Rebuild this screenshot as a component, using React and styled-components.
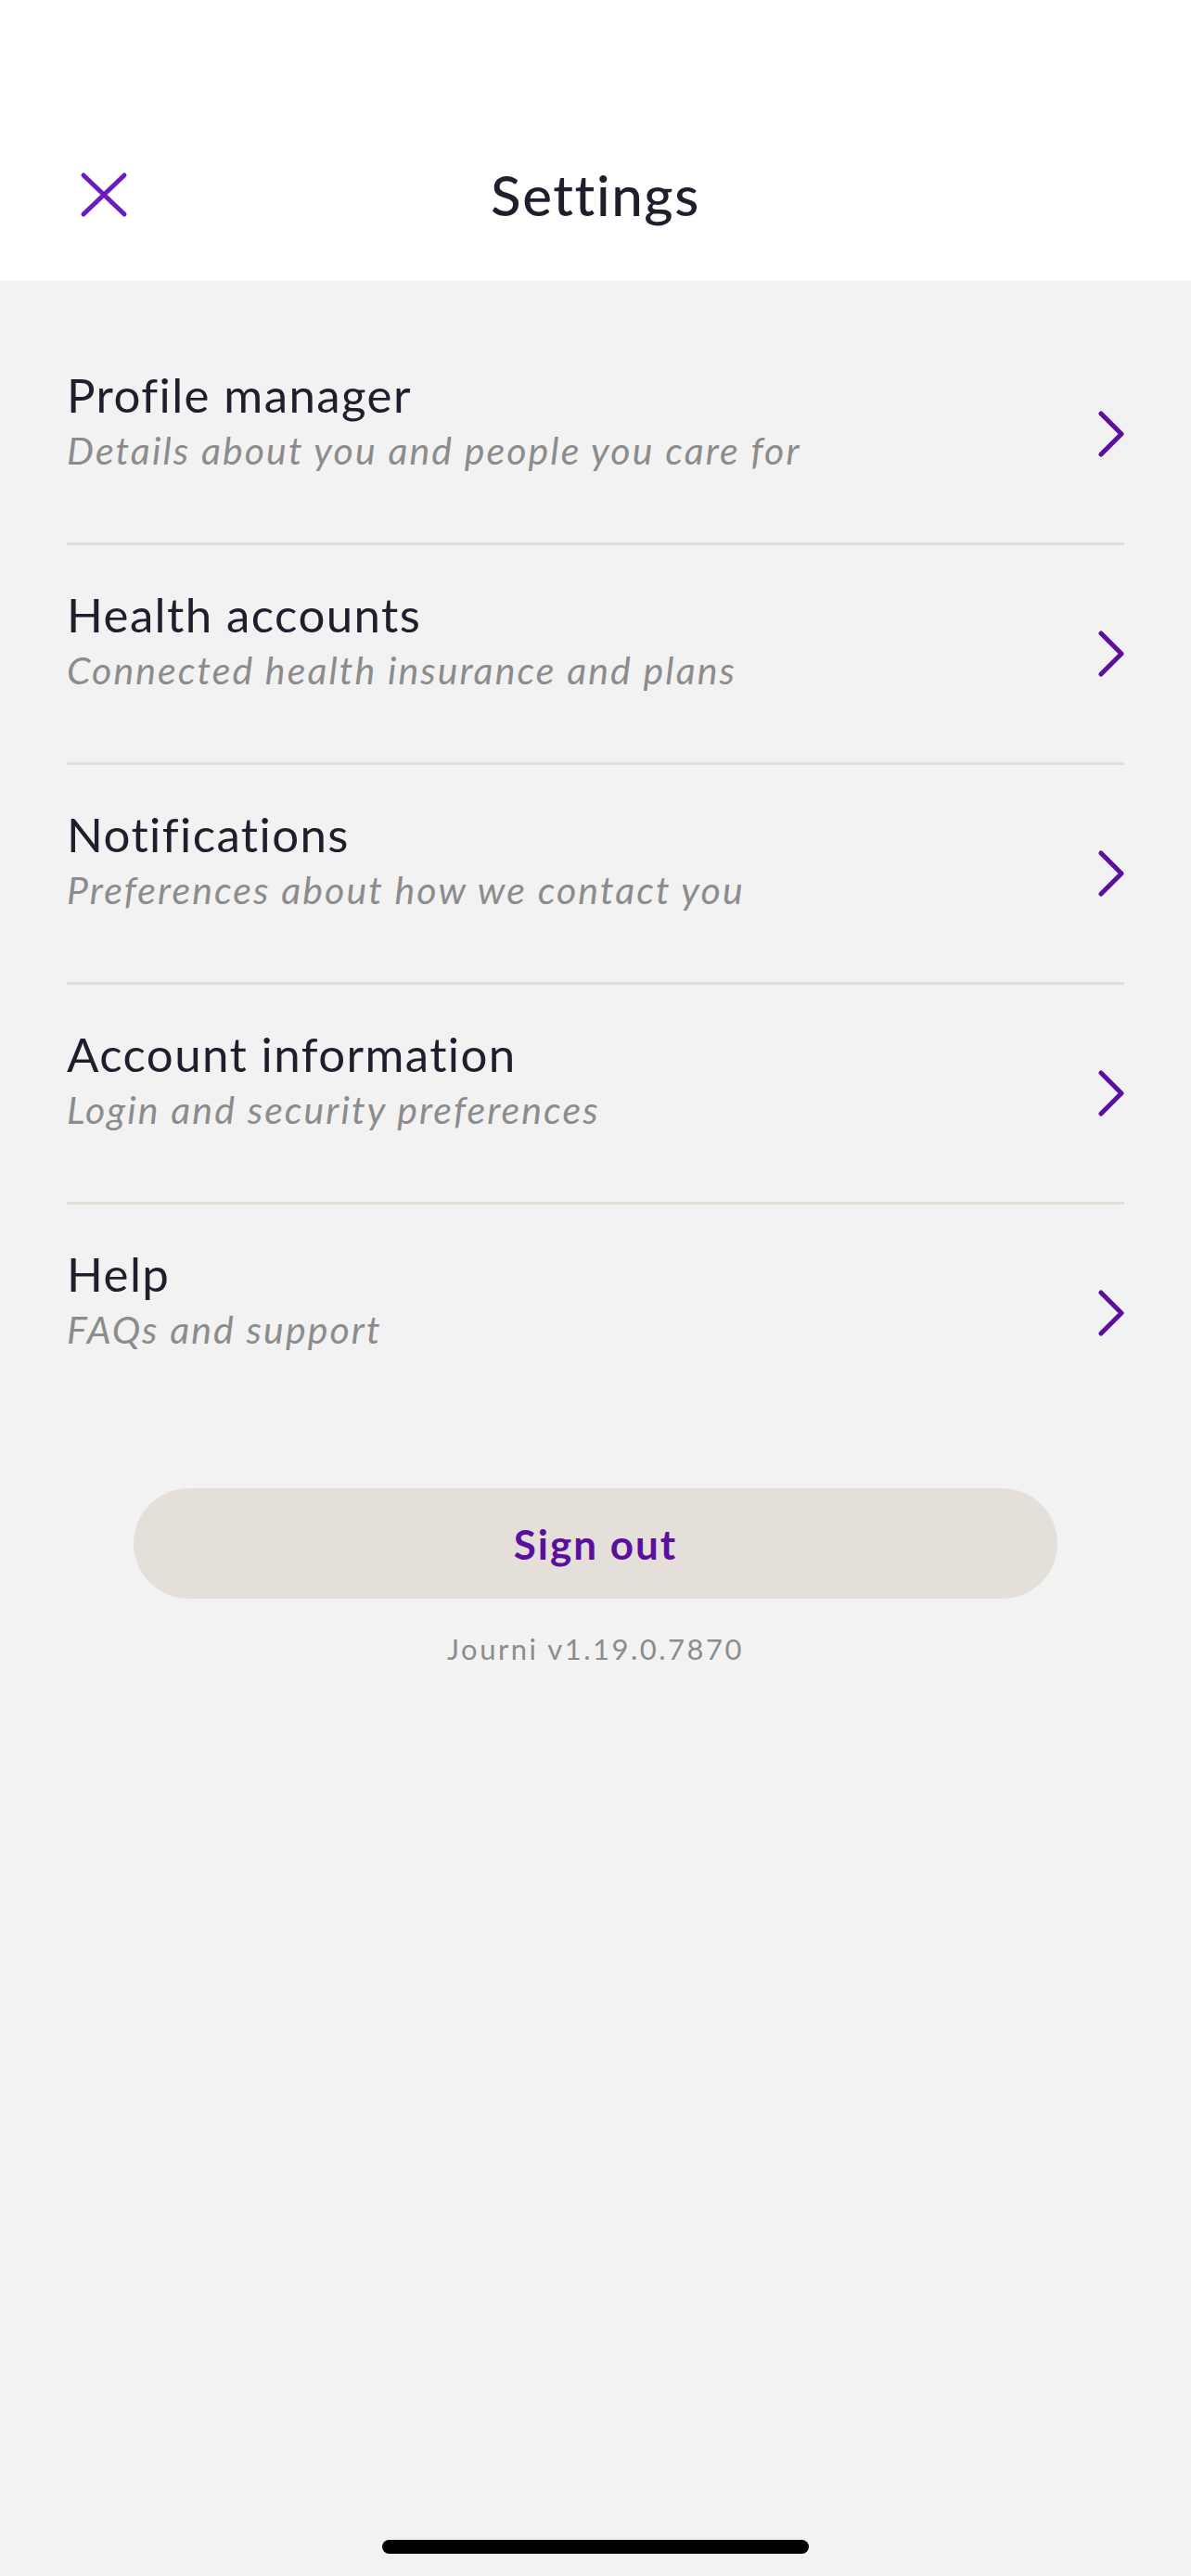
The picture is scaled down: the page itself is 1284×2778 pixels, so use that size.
import React from 'react';
import styled, { createGlobalStyle } from 'styled-components';

const colors = {
  bg: '#f2f2f2',
  white: '#ffffff',
  ink: '#1f1e2c',
  muted: '#8c8c8c',
  divider: '#e3dfd7',
  button: '#e4e0d9',
  purple: '#5b0f9e',
  close: '#6b1dbd',
};

const GlobalStyle = createGlobalStyle`
  html, body {
    margin: 0;
    padding: 0;
    background: ${colors.bg};
  }
  body {
    font-family: Lato, "Noto Sans", sans-serif;
    -webkit-font-smoothing: antialiased;
  }
`;

const Screen = styled.div`
  position: relative;
  min-height: 2778px;
  background: ${colors.bg};
`;

const Header = styled.header`
  height: 303px;
  box-sizing: border-box;
  padding: 150px 86px 0;
  background: ${colors.white};
`;

const TitleBar = styled.div`
  display: grid;
  grid-template-columns: 120px 1fr 120px;
  align-items: center;
  height: 120px;
`;

const CloseButton = styled.button`
  display: flex;
  align-items: center;
  width: 52px;
  height: 50px;
  padding: 0;
  border: none;
  background: none;
  cursor: pointer;
`;

const Title = styled.h1`
  margin: 0;
  text-align: center;
  font-size: 60px;
  font-weight: 500;
  color: ${colors.ink};
  letter-spacing: 1.6px;
`;

const List = styled.ul`
  list-style: none;
  margin: 0;
  padding: 48px 72px 0;
`;

const Row = styled.li`
  display: flex;
  align-items: center;
  justify-content: space-between;
  height: 237px;
  box-sizing: border-box;
  border-bottom: 3px solid ${({ last }) => (last ? 'transparent' : colors.divider)};
  cursor: pointer;
`;

const RowText = styled.div`
  display: flex;
  flex-direction: column;
  padding-bottom: 22px;
`;

const RowTitle = styled.span`
  font-size: 51px;
  line-height: 58px;
  color: ${colors.ink};
  letter-spacing: 1.4px;
`;

const RowSubtitle = styled.span`
  font-size: 41px;
  line-height: 62px;
  font-style: italic;
  color: ${colors.muted};
  letter-spacing: 2.1px;
`;

const Chevron = styled.svg`
  flex: none;
`;

const Footer = styled.div`
  display: flex;
  flex-direction: column;
  align-items: center;
  padding-top: 69px;
`;

const SignOut = styled.button`
  width: 996px;
  height: 119px;
  border: none;
  border-radius: 60px;
  background: ${colors.button};
  color: ${colors.purple};
  font-family: Lato, "Noto Sans", sans-serif;
  font-size: 44px;
  font-weight: 700;
  letter-spacing: 2px;
  cursor: pointer;
`;

const Version = styled.p`
  margin: 34px 0 0;
  font-size: 31px;
  line-height: 40px;
  color: ${colors.muted};
  letter-spacing: 2.5px;
`;

const HomeIndicator = styled.div`
  position: absolute;
  left: 50%;
  bottom: 24px;
  width: 460px;
  height: 15px;
  margin-left: -230px;
  border-radius: 8px;
  background: #000;
`;

const items = [
  { title: 'Profile manager', subtitle: 'Details about you and people you care for' },
  { title: 'Health accounts', subtitle: 'Connected health insurance and plans' },
  { title: 'Notifications', subtitle: 'Preferences about how we contact you' },
  { title: 'Account information', subtitle: 'Login and security preferences' },
  { title: 'Help', subtitle: 'FAQs and support' },
];

const CloseIcon = () => (
  <svg width="52" height="50" viewBox="0 0 52 50" fill="none">
    <path
      d="M4 4 L48 46 M48 4 L4 46"
      stroke={colors.close}
      strokeWidth="5"
      strokeLinecap="round"
    />
  </svg>
);

const App = () => (
  <>
    <GlobalStyle />
    <Screen>
      <Header>
        <TitleBar>
          <CloseButton aria-label="Close">
            <CloseIcon />
          </CloseButton>
          <Title>Settings</Title>
          <span />
        </TitleBar>
      </Header>

      <List>
        {items.map((item, i) => (
          <Row key={item.title} last={i === items.length - 1}>
            <RowText>
              <RowTitle>{item.title}</RowTitle>
              <RowSubtitle>{item.subtitle}</RowSubtitle>
            </RowText>
            <Chevron width="28" height="50" viewBox="0 0 28 50" fill="none">
              <path
                d="M3 3 L25 25 L3 47"
                stroke={colors.purple}
                strokeWidth="5"
                strokeLinecap="round"
                strokeLinejoin="round"
              />
            </Chevron>
          </Row>
        ))}
      </List>

      <Footer>
        <SignOut>Sign out</SignOut>
        <Version>Journi v1.19.0.7870</Version>
      </Footer>

      <HomeIndicator />
    </Screen>
  </>
);

export default App;
